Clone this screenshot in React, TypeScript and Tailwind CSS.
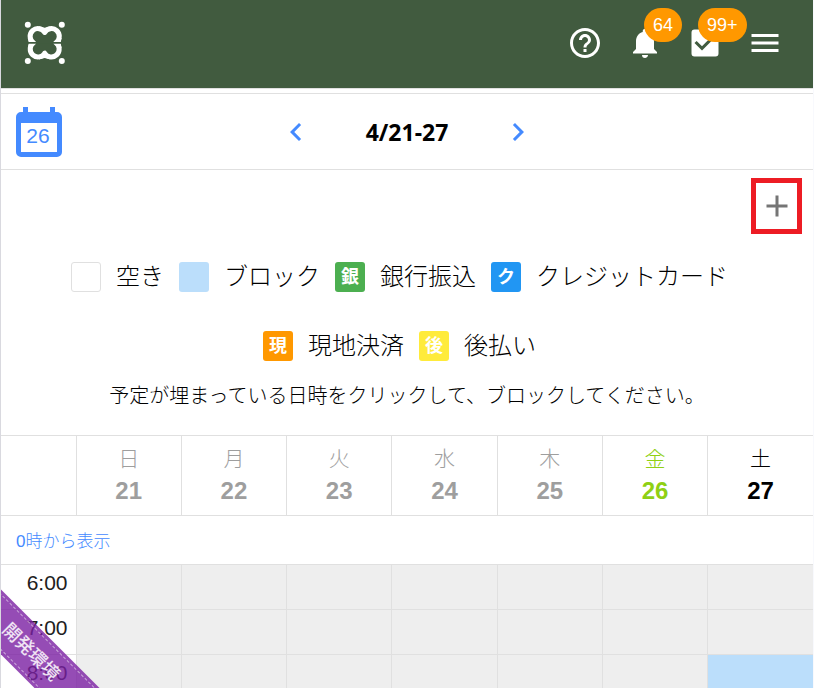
import React from 'react'
import clsx from 'clsx'
import {
  MdAdd,
  MdCheckBox,
  MdChevronLeft,
  MdChevronRight,
  MdHelpOutline,
  MdMenu,
  MdNotifications,
} from 'react-icons/md'

const legendRows = [
  [
    { label: '空き', mark: '', color: 'border border-[#e0e0e0] bg-white' },
    { label: 'ブロック', mark: '', color: 'bg-[#bbdefb]' },
    { label: '銀行振込', mark: '銀', color: 'bg-[#4caf50]' },
    { label: 'クレジットカード', mark: 'ク', color: 'bg-[#2196f3]' },
  ],
  [
    { label: '現地決済', mark: '現', color: 'bg-[#ff9800]' },
    { label: '後払い', mark: '後', color: 'bg-[#ffeb3b]' },
  ],
]

const days = [
  { name: '日', date: 21, color: 'text-[#9e9e9e]' },
  { name: '月', date: 22, color: 'text-[#9e9e9e]' },
  { name: '火', date: 23, color: 'text-[#9e9e9e]' },
  { name: '水', date: 24, color: 'text-[#9e9e9e]' },
  { name: '木', date: 25, color: 'text-[#9e9e9e]' },
  { name: '金', date: 26, color: 'text-[#8fd014]' },
  { name: '土', date: 27, color: 'text-black' },
]

const hours = ['6:00', '7:00', '8:00']

// "date-hour" keys of blocked slots
const blocked = ['27-8:00']

const Logo = () => (
  <svg width="42" height="44" viewBox="0 0 42 44" fill="none">
    <g fill="#fff">
      <circle cx="3.8" cy="3.8" r="3" />
      <circle cx="37.8" cy="3.8" r="3" />
      <circle cx="3.8" cy="40" r="3" />
      <circle cx="37.8" cy="40" r="3" />
      <path d="M3.8 17L4.8 21.9L3.8 27H8V17zM37.600 17L36.600 21.900L37.600 27H33.400V17z" />
      <path d="M15 5.200L20.700 6.700L26.400 5.200V9H15zM15 38.500L20.700 37L26.400 38.500V35H15z" />
    </g>
    <path
      stroke="#fff"
      strokeWidth="5"
      strokeLinejoin="round"
      d="M9.5 21.8A7.8 7.8 0 1 1 20.7 11.5A7.8 7.8 0 1 1 31.9 21.8A7.8 7.8 0 1 1 20.7 32.2A7.8 7.8 0 1 1 9.5 21.8z"
    />
    <path stroke="#415b3f" strokeWidth="1.8" d="M0 21.9h42" />
  </svg>
)

const CalendarIcon = () => (
  <svg width="46" height="50" viewBox="0 0 46 50">
    <path
      fill="#448aff"
      fillRule="evenodd"
      d="M7 0h5v5h22V0h5v5h2a5 5 0 0 1 5 5v35a5 5 0 0 1-5 5H5a5 5 0 0 1-5-5V10a5 5 0 0 1 5-5h2zM5 16v29h36V16z"
    />
    <text x="22" y="36" textAnchor="middle" fontSize="21" fill="#448aff">
      26
    </text>
  </svg>
)

const Badge = ({ className, children }: { className: string; children: React.ReactNode }) => (
  <span
    className={clsx(
      'absolute -top-[17px] h-[34px] rounded-full bg-[#ff9800] px-[9px] text-lg leading-[34px] text-white',
      className,
    )}
  >
    {children}
  </span>
)

const Header = () => (
  <header className="flex h-[89px] shrink-0 items-center justify-between border-b border-[#e0e0e0] bg-[#415b3f] pr-[30px] pb-0.5 pl-[23px] text-white">
    <a href="#" aria-label="ホーム">
      <Logo />
    </a>
    <nav className="flex items-center gap-6">
      <button aria-label="ヘルプ">
        <MdHelpOutline size={36} />
      </button>
      <button className="relative" aria-label="通知">
        <MdNotifications size={36} />
        <Badge className="left-[17px]">64</Badge>
      </button>
      <button className="relative" aria-label="タスク">
        <MdCheckBox size={36} />
        <Badge className="left-[11px]">99+</Badge>
      </button>
      <button aria-label="メニュー">
        <MdMenu size={36} />
      </button>
    </nav>
  </header>
)

const WeekNav = () => (
  <div className="mt-1 grid h-[77px] shrink-0 grid-cols-[1fr_auto_1fr] items-center border-y border-[#e0e0e0] px-[15px]">
    <button className="justify-self-start" aria-label="今日">
      <CalendarIcon />
    </button>
    <div className="flex items-center text-[#448aff]">
      <button aria-label="前の週">
        <MdChevronLeft size={36} />
      </button>
      <h1 className="w-[186px] pt-0.5 text-center font-['Noto_Sans',sans-serif] text-[23px] font-bold text-black">
        4/21-27
      </h1>
      <button aria-label="次の週">
        <MdChevronRight size={36} />
      </button>
    </div>
  </div>
)

const Legend = () => (
  <div className="mt-2 text-2xl font-light">
    {legendRows.map((row, i) => (
      <ul key={i} className="flex h-[69px] items-center justify-center">
        {row.map((item) => (
          <li key={item.label} className="mr-[15px] flex items-center gap-[15px]">
            <span
              className={clsx(
                'flex size-[30px] items-center justify-center rounded-[3px] text-lg font-bold text-white',
                item.color,
              )}
            >
              {item.mark}
            </span>
            {item.label}
          </li>
        ))}
      </ul>
    ))}
  </div>
)

const Schedule = () => (
  <table className="mt-[23px] w-full table-fixed border-collapse">
    <thead>
      <tr className="h-20 border-y border-[#e0e0e0]">
        <th className="w-[75px]"></th>
        {days.map((day) => (
          <th key={day.date} className={clsx('border-l border-[#e0e0e0] p-0 pb-0.5', day.color)}>
            <div className="text-[21px] leading-8 font-light">{day.name}</div>
            <div className="text-2xl leading-8 font-bold">{day.date}</div>
          </th>
        ))}
      </tr>
    </thead>
    <tbody>
      <tr className="h-[49px]">
        <td colSpan={8} className="px-[15px] pt-1 pb-0">
          <button className="text-[17px] font-light text-[#448aff]">0時から表示</button>
        </td>
      </tr>
      {hours.map((hour) => (
        <tr key={hour} className="h-[45px] border-t border-[#e0e0e0]">
          <th className="py-1 pr-2 pl-0 text-right align-top text-[21px] leading-7 font-normal text-[#212121]">
            {hour}
          </th>
          {days.map((day) => (
            <td
              key={day.date}
              className={clsx(
                'border-l border-[#e0e0e0]',
                blocked.includes(`${day.date}-${hour}`) ? 'bg-[#bbdefb]' : 'bg-[#eeeeee]',
              )}
            ></td>
          ))}
        </tr>
      ))}
    </tbody>
  </table>
)

const EnvRibbon = () => (
  <div className="pointer-events-none absolute bottom-0 left-0 size-[100px] overflow-hidden">
    <div className="absolute top-[41px] -left-[70px] flex h-[46px] w-[200px] rotate-45 bg-[#7b1fa2]/80 py-[3px]">
      <div className="flex flex-1 items-center justify-center border-y border-dashed border-white/50 text-lg font-medium text-white/85">
        開発環境
      </div>
    </div>
  </div>
)

const App = () => {
  return (
    <div className="relative flex h-screen flex-col overflow-hidden border-r border-l border-r-[#f8f9fd] border-l-[#d9d9df] bg-white font-['Liberation_Sans','Noto_Sans_CJK_JP',sans-serif] text-black">
      <Header />
      <WeekNav />
      <main>
        <div className="flex justify-end px-[11px] pt-2">
          <button
            className="flex h-14 w-[51px] items-center justify-center border-5 border-[#ed1c24] text-[#757575]"
            aria-label="予定を追加"
          >
            <MdAdd size={36} />
          </button>
        </div>
        <Legend />
        <p className="text-center text-xl leading-8 font-light">
          予定が埋まっている日時をクリックして、ブロックしてください。
        </p>
        <Schedule />
      </main>
      <EnvRibbon />
    </div>
  )
}

export default App
